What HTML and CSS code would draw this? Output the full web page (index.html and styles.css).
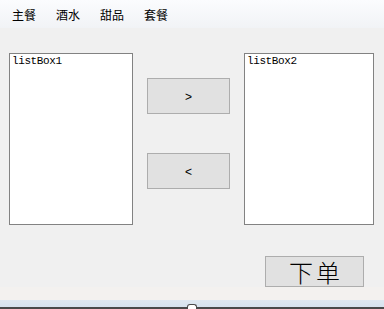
FILE: index.html
```html
<!DOCTYPE html>
<html lang="zh-CN">
<head>
    <meta charset="UTF-8">
    <title>点餐</title>
    <link rel="stylesheet" href="styles.css">
</head>
<body>

    <div class="menubar">
        <span class="menu-item">主餐</span>
        <span class="menu-item">酒水</span>
        <span class="menu-item">甜品</span>
        <span class="menu-item">套餐</span>
    </div>

    <div class="main">
        <div class="listbox list-left">listBox1</div>
        <div class="move-buttons">
            <button class="btn move">&gt;</button>
            <button class="btn move">&lt;</button>
        </div>
        <div class="listbox list-right">listBox2</div>
    </div>

    <div class="footer">
        <button class="btn order">下单</button>
    </div>

    <div class="statusbar"></div>
    <div class="taskbar"><span class="grip"></span></div>

</body>
</html>
```

FILE: styles.css
```css
html, body {
    margin: 0;
    padding: 0;
}
body {
    width: 384px;
    height: 309px;
    overflow: hidden;
    background: #f0f0f0;
    font-family: "Noto Sans CJK SC", sans-serif;
}
.menubar {
    height: 28px;
    display: flex;
    align-items: center;
    padding-left: 2px;
    background: linear-gradient(#fbfcfe, #f1f3f6);
}
.menu-item {
    font-size: 12px;
    color: #000;
    padding: 0 10px;
    line-height: 16px;
    margin-top: 2px;
}
.main {
    display: flex;
    margin-top: 25px;
    padding-left: 9px;
}
.listbox {
    box-sizing: border-box;
    height: 172px;
    background: #fff;
    border: 1px solid #828282;
    font-family: "Liberation Mono", monospace;
    font-size: 11px;
    letter-spacing: -0.4px;
    line-height: 14px;
    padding: 0 0 0 2px;
    color: #000;
}
.list-left {
    width: 124px;
}
.list-right {
    width: 130px;
}
.move-buttons {
    display: flex;
    flex-direction: column;
    gap: 39px;
    margin: 25px 14px 0 14px;
}
.btn {
    box-sizing: border-box;
    background: #e1e1e1;
    border: 1px solid #adadad;
    padding: 0;
    color: #000;
}
.move {
    width: 83px;
    height: 36px;
    font-family: "Liberation Sans", sans-serif;
    font-size: 12px;
    padding-top: 2px;
}
.footer {
    display: flex;
    padding-left: 265px;
    margin-top: 31px;
}
.order {
    width: 99px;
    height: 31px;
    font-family: "Noto Sans CJK SC", sans-serif;
    font-size: 24px;
    font-weight: 300;
    line-height: 29px;
    letter-spacing: 3px;
    padding-left: 3px;
}
.statusbar {
    height: 13px;
    background: #f3f1ef;
}
.taskbar {
    position: relative;
    height: 7px;
    background: linear-gradient(#dfe8f1, #d7e3ee);
    border-bottom: 2px solid #4a4a4a;
}
.grip {
    position: absolute;
    left: 187px;
    bottom: -2px;
    width: 8px;
    height: 4px;
    background: #fff;
    border: 1px solid #4a4a4a;
    border-bottom: 0;
    border-radius: 3px 3px 0 0;
}
```
